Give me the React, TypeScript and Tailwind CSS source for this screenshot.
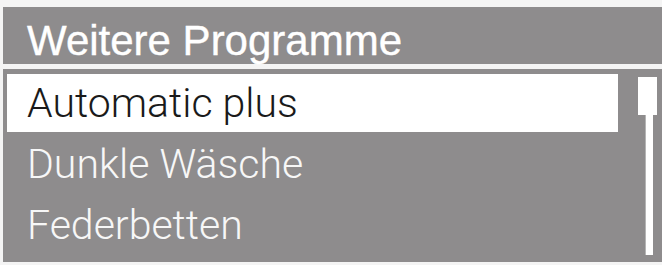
import React from "react";

export default function App() {
  const font = { fontFamily: '"Liberation Sans", Arial, sans-serif' };
  const light = { fontFamily: 'Roboto, "Liberation Sans", sans-serif' };
  return (
    <div className="w-[662px] h-[265px] bg-[#f4f4f4] pt-[7px] pl-[3px] overflow-hidden" style={font}>
      <div className="h-[57px] bg-[#8e8c8d] pl-[24px] pt-[10px] text-[42px] leading-[47px] text-white [-webkit-text-stroke:0.4px_white] whitespace-nowrap">
        Weitere Programme
      </div>
      <div className="mt-[5px] h-[193px] bg-[#8e8c8d] flex">
        <div className="flex-1 flex flex-col gap-[3px] pt-[5px] pl-[4px]" style={light}>
          <div className="h-[58px] bg-white pl-[20px] text-[41px] font-light leading-[58px] text-[#1a1a1a] whitespace-nowrap">
            Automatic plus
          </div>
          <div className="h-[58px] pl-[20px] text-[41px] font-light leading-[58px] text-[#f7f7f7] whitespace-nowrap">
            Dunkle Wäsche
          </div>
          <div className="h-[58px] pl-[20px] text-[41px] font-light leading-[58px] text-[#f7f7f7] whitespace-nowrap">
            Federbetten
          </div>
        </div>
        <div className="w-[44px] flex flex-col pt-[8px]">
          <div className="ml-[20px] w-[19px] h-[38px] bg-white" />
          <div className="ml-[28px] w-[7px] h-[140px] bg-white shadow-[-1px_0_0_#b5b5b5]" />
        </div>
      </div>
    </div>
  );
}
